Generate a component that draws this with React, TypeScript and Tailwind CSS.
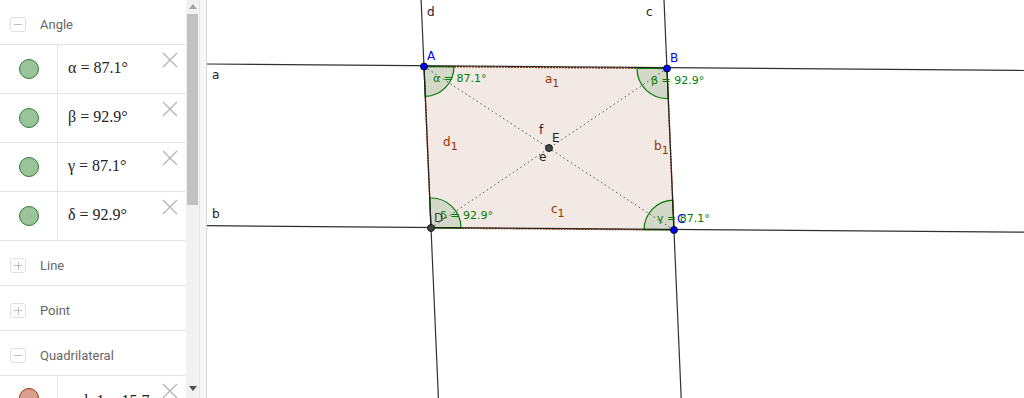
import React from "react";

const sans = { fontFamily: "Roboto, 'DejaVu Sans', sans-serif" };
const serif = { fontFamily: "'Liberation Serif', 'DejaVu Serif', serif" };

function GroupHeader({ label, open }: { label: string; open?: boolean }) {
  return (
    <div className="flex h-[45px] shrink-0 items-center gap-[14px] border-b border-[#e4e4e4] pl-[10px] pt-[5px]" style={sans}>
      <span className="flex h-[15px] w-[16px] items-center justify-center rounded-[3px] border border-[#e0e0e0]">
        {open ? (
          <i className="block h-px w-[8px] bg-[#bdbdbd]" />
        ) : (
          <span className="relative block h-[8px] w-[8px]">
            <i className="absolute left-0 top-[3.5px] block h-px w-[8px] bg-[#bdbdbd]" />
            <i className="absolute left-[3.5px] top-0 block h-[8px] w-px bg-[#bdbdbd]" />
          </span>
        )}
      </span>
      <span className="text-[13px] text-[#666]">{label}</span>
    </div>
  );
}

function CloseX() {
  return (
    <svg className="absolute right-[8px] top-[7px]" width="16" height="16" viewBox="0 0 16 16">
      <path d="M1 1 L15 15 M15 1 L1 15" stroke="#b4b4b4" strokeWidth="1.3" />
    </svg>
  );
}

function AngleRow({ sym, value }: { sym: string; value: string }) {
  return (
    <div className="relative flex h-[49px] shrink-0 border-b border-[#e4e4e4]">
      <div className="flex w-[58px] items-center justify-center border-r border-[#e4e4e4]">
        <span className="h-[20px] w-[20px] rounded-full border border-[#2e7d32] bg-[#99c499]" />
      </div>
      <div className="flex items-center pb-[3px] pl-[10px] text-[16px] text-[#222]" style={serif}>
        {sym} = {value}°
      </div>
      <CloseX />
    </div>
  );
}

function Panel() {
  return (
    <div className="flex h-[398px] w-[207px] shrink-0 overflow-hidden bg-white">
      <div className="flex w-[186px] flex-col overflow-hidden">
        <GroupHeader label="Angle" open />
        <AngleRow sym="α" value="87.1" />
        <AngleRow sym="β" value="92.9" />
        <AngleRow sym="γ" value="87.1" />
        <AngleRow sym="δ" value="92.9" />
        <GroupHeader label="Line" />
        <GroupHeader label="Point" />
        <GroupHeader label="Quadrilateral" open />
        <div className="relative flex h-[49px] shrink-0">
          <div className="flex w-[58px] items-start justify-center border-r border-[#e4e4e4] pt-[12px]">
            <span className="h-[20px] w-[20px] rounded-full border border-[#993300] bg-[#d9a08b]" />
          </div>
          <div className="pl-[10px] pt-[13px] text-[16px] text-[#222]" style={serif}>
            poly1 = 15.7
          </div>
          <CloseX />
        </div>
      </div>
      <div className="flex w-[13px] flex-col items-center bg-[#f1f1f1]">
        <span className="mt-[4px] h-0 w-0 border-x-[4px] border-b-[5px] border-x-transparent border-b-[#a3a3a3]" />
        <span className="mt-[5px] h-[191px] w-[11px] bg-[#c1c1c1]" />
        <span className="mt-auto mb-[7px] h-0 w-0 border-x-[4px] border-t-[5px] border-x-transparent border-t-[#505050]" />
      </div>
      <div className="w-[8px] border-l border-[#e6e6e6] bg-[#f7f7f7] shadow-[inset_-1px_0_0_#d8d8d8]" />
    </div>
  );
}

type P = [number, number];
const A: P = [424, 66.5];
const B: P = [667, 68.5];
const C: P = [674, 230];
const D: P = [431, 228];
const E: P = [549, 148];

function sector(o: P, p1: P, p2: P, r = 30) {
  const u = (p: P) => {
    const dx = p[0] - o[0];
    const dy = p[1] - o[1];
    const l = Math.hypot(dx, dy);
    return [o[0] + (dx / l) * r, o[1] + (dy / l) * r];
  };
  const s = u(p1);
  const e = u(p2);
  return `M${o[0]} ${o[1]} L${s[0]} ${s[1]} A${r} ${r} 0 0 1 ${e[0]} ${e[1]} Z`;
}

function Canvas() {
  const green = "#007d00";
  const brown = "#993300";
  const ink = "#1a1a1a";
  const poly = `${A[0]},${A[1]} ${B[0]},${B[1]} ${C[0]},${C[1]} ${D[0]},${D[1]}`;
  return (
    <div className="flex-1 bg-white">
      <svg width="817" height="398" viewBox="207 0 817 398" style={{ fontFamily: "'DejaVu Sans', sans-serif" }}>
        <polygon points={poly} fill="#f2e9e4" />
        <polygon points={poly} fill="none" stroke={brown} strokeWidth="1.4" strokeDasharray="2 1" />
        {/* diagonals */}
        <line x1={A[0]} y1={A[1]} x2={C[0]} y2={C[1]} stroke="#555" strokeWidth="1" strokeDasharray="1.5 3" />
        <line x1={B[0]} y1={B[1]} x2={D[0]} y2={D[1]} stroke="#555" strokeWidth="1" strokeDasharray="1.5 3" />
        {/* angles */}
        {[sector(A, B, D), sector(B, C, A), sector(C, D, B), sector(D, A, C)].map((d, i) => (
          <path key={i} d={d} fill="#006400" fillOpacity="0.12" stroke={green} strokeWidth="1.2" />
        ))}
        {/* lines */}
        <g stroke={ink} strokeWidth="1.2" strokeOpacity="0.9">
          <line x1="207" y1="64" x2="1024" y2="70.5" />
          <line x1="207" y1="225.7" x2="1024" y2="232.2" />
          <line x1="421.1" y1="0" x2="438.4" y2="398" />
          <line x1="664" y1="0" x2="681.2" y2="398" />
        </g>
        {/* line labels */}
        <g fill="#222" fontSize="12">
          <text x="427" y="16">d</text>
          <text x="646" y="16">c</text>
          <text x="212" y="79">a</text>
          <text x="212" y="218">b</text>
          <text x="539" y="134">f</text>
          <text x="539" y="161">e</text>
          <text x="552" y="142">E</text>
        </g>
        {/* segment labels */}
        <g fill={brown} fontSize="12">
          <text x="545" y="83">a<tspan dy="4" fontSize="11">1</tspan></text>
          <text x="654" y="150">b<tspan dy="4" fontSize="11">1</tspan></text>
          <text x="551" y="213">c<tspan dy="4" fontSize="11">1</tspan></text>
          <text x="443" y="146">d<tspan dy="4" fontSize="11">1</tspan></text>
        </g>
        {/* angle labels */}
        <g fill={green} fontSize="11">
          <text x="433" y="82">α = 87.1°</text>
          <text x="651" y="84">β = 92.9°</text>
          <text x="440" y="219">δ = 92.9°</text>
          <text x="657" y="222">γ = 87.1°</text>
        </g>
        {/* points */}
        <text x="427" y="60" fill="#0000ff" fontSize="12">A</text>
        <text x="670" y="62" fill="#0000ff" fontSize="12">B</text>
        <text x="677" y="223" fill="#0000ff" fontSize="12">C</text>
        <text x="434" y="222" fill="#444" fontSize="12">D</text>
        <circle cx={A[0]} cy={A[1]} r="3.5" fill="#0000ff" stroke="#000" strokeWidth="0.8" />
        <circle cx={B[0]} cy={B[1]} r="3.5" fill="#0000ff" stroke="#000" strokeWidth="0.8" />
        <circle cx={C[0]} cy={C[1]} r="3.5" fill="#0000ff" stroke="#000" strokeWidth="0.8" />
        <circle cx={D[0]} cy={D[1]} r="3.5" fill="#444" stroke="#000" strokeWidth="0.8" />
        <circle cx={E[0]} cy={E[1]} r="3.5" fill="#444" stroke="#000" strokeWidth="0.8" />
      </svg>
    </div>
  );
}

export default function App() {
  return (
    <div className="flex h-[398px] w-[1024px] overflow-hidden bg-white">
      <Panel />
      <Canvas />
    </div>
  );
}
